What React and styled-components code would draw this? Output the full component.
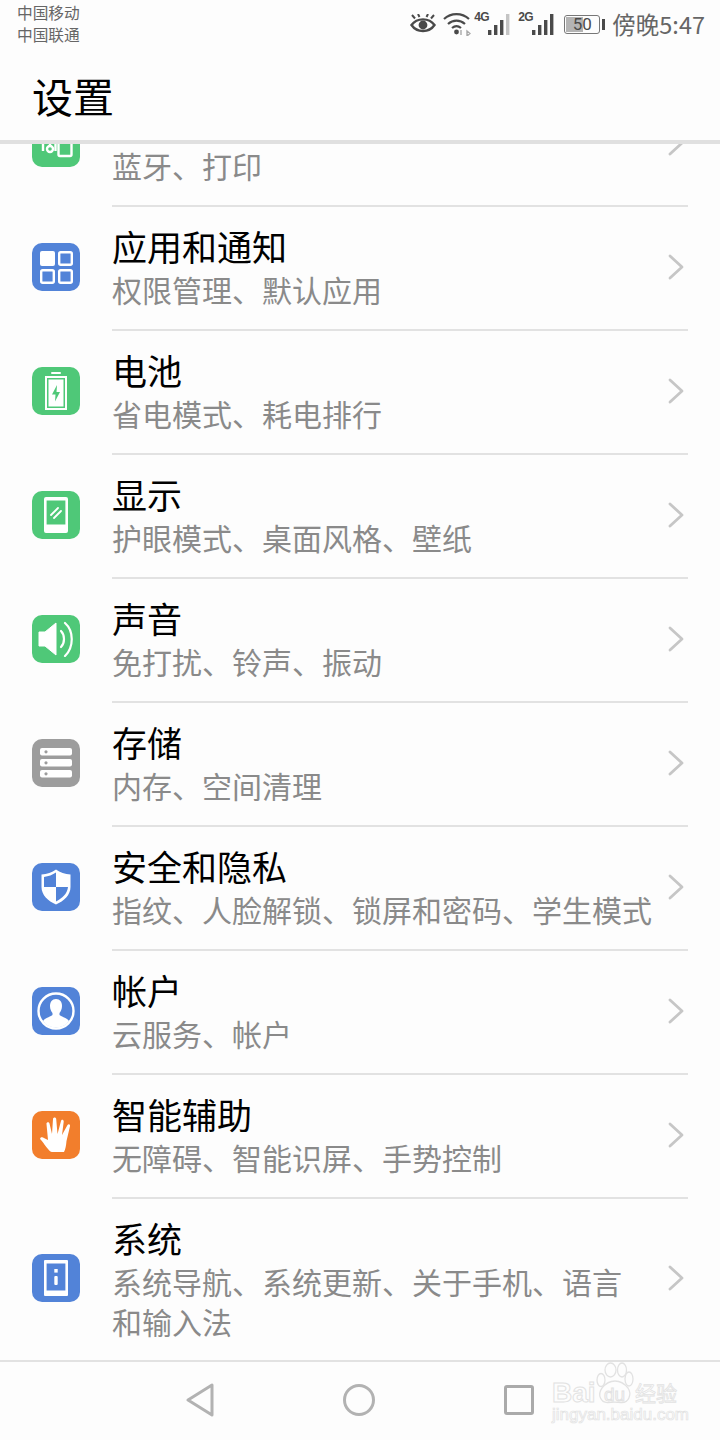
import styled, { createGlobalStyle } from 'styled-components';

const GlobalStyle = createGlobalStyle`
  html, body {
    margin: 0;
    padding: 0;
    background: #fdfdfd;
  }
  * {
    box-sizing: border-box;
  }
`;

const BLUE = '#5283d8';
const GREEN = '#4fc878';
const GRAY = '#9d9d9d';
const ORANGE = '#f27e2c';
const STATUS_DARK = '#4a4a4a';

const ConnectIcon = () => (
  <svg width="36" height="36" viewBox="0 0 36 36" fill="none" stroke="#fff" strokeWidth="2.4">
    <rect x="20.5" y="5" width="13" height="26" rx="1.5" />
    <circle cx="12" cy="24" r="3" />
    <path d="M12 8 V21 M5 8 V26 M17.5 8 V26" />
  </svg>
);

const AppsIcon = () => (
  <svg width="33" height="33" viewBox="0 0 33 33" fill="none" stroke="#fff" strokeWidth="2.4">
    <rect x="0" y="0" width="15" height="15" rx="2" fill="#fff" stroke="none" />
    <rect x="19.2" y="1.2" width="12.6" height="12.6" rx="1.5" />
    <rect x="1.2" y="19.2" width="12.6" height="12.6" rx="1.5" />
    <rect x="19.2" y="19.2" width="12.6" height="12.6" rx="1.5" />
  </svg>
);

const BatteryIcon = () => (
  <svg width="24" height="38" viewBox="0 0 24 38" fill="none">
    <rect x="7" y="0" width="10" height="2" rx="1" fill="#fff" />
    <rect x="2" y="5" width="20" height="32" stroke="#fff" strokeWidth="2" />
    <rect x="4.5" y="7.5" width="15" height="27" fill="#fff" />
    <path d="M13 13 L8 22.5 H11.5 L11 29.5 L16 20 H12.5 Z" fill={GREEN} />
  </svg>
);

const DisplayIcon = () => (
  <svg width="24" height="36" viewBox="0 0 24 36">
    <path fillRule="evenodd" d="M2 0 H22 A2 2 0 0 1 24 2 V34 A2 2 0 0 1 22 36 H2 A2 2 0 0 1 0 34 V2 A2 2 0 0 1 2 0 Z M2.6 3.6 V27.5 H21.4 V3.6 Z" fill="#fff" />
    <path d="M7 18 L14 11 M10 21 L17 14" stroke="#fff" strokeWidth="1.8" strokeLinecap="round" />
  </svg>
);

const SoundIcon = () => (
  <svg width="36" height="36" viewBox="0 0 36 36" fill="none">
    <path d="M1 11 H7 L18 2 V34 L7 25 H1 Z" fill="#fff" stroke="#fff" strokeWidth="1" strokeLinejoin="round" />
    <path d="M23 10 C27 14 27 22 23 26" stroke="#fff" strokeWidth="2.2" strokeLinecap="round" />
    <path d="M27 2 C36 10 36 26 27 35" stroke="#fff" strokeWidth="2.2" strokeLinecap="round" />
  </svg>
);

const StorageIcon = () => (
  <svg width="32" height="30" viewBox="0 0 32 30">
    <rect x="0" y="0" width="32" height="7.6" rx="2" fill="#fff" />
    <rect x="0" y="11" width="32" height="7.6" rx="2" fill="#fff" />
    <rect x="0" y="22" width="32" height="7.6" rx="2" fill="#fff" />
    <circle cx="6" cy="3.8" r="1.6" fill={GRAY} />
    <circle cx="6" cy="14.8" r="1.6" fill={GRAY} />
    <circle cx="6" cy="25.8" r="1.6" fill={GRAY} />
  </svg>
);

const ShieldIcon = () => (
  <svg width="32" height="38" viewBox="0 0 32 38" fill="none">
    <path d="M16 1.5 C20 4.5 25 6 30.5 6.5 V19 C30.5 27 24 33 16 36.5 C8 33 1.5 27 1.5 19 V6.5 C7 6 12 4.5 16 1.5 Z" fill="#fff" />
    <path d="M16 4.6 C12.5 7 8.5 8.4 4 9 V19 H16 Z" fill={BLUE} />
    <path d="M16 19 H28 C27.5 25.5 22 30.5 16 33.4 Z" fill={BLUE} />
  </svg>
);

const AccountIcon = () => (
  <svg width="38" height="38" viewBox="0 0 38 38" fill="none">
    <circle cx="19" cy="19" r="17.5" stroke="#fff" strokeWidth="2.4" />
    <path d="M19 7 C23 7 25 10 25 14 C25 17 23.8 19.5 22.5 21 V23 C24.5 25 30 25.5 32 29 C29 33.5 24 35.5 19 35.5 C14 35.5 9 33.5 6 29 C8 25.5 13.5 25 15.5 23 V21 C14.2 19.5 13 17 13 14 C13 10 15 7 19 7 Z" fill="#fff" />
  </svg>
);

const HandIcon = () => (
  <svg width="32" height="36" viewBox="0 0 32 36">
    <path
      d="M8 32 C6 30 3 25 0.5 22.5 C-0.5 21 1 19.5 3 20.5 L8 23 L6.5 7 C6.3 5 9 4.7 9.5 6.5 L12 17 L13 2 C13.2 0 16 0 16.2 2 L17.5 17 L21 4 C21.5 2 24 2.7 23.7 4.7 L22 18 L27.5 8 C28.5 6.5 30.5 7.5 30 9.2 L26.5 24 C26 29 25.5 32 24 35 H12 C10.5 35 9 33.5 8 32 Z"
      fill="#fff"
    />
  </svg>
);

const InfoIcon = () => (
  <svg width="24" height="36" viewBox="0 0 24 36">
    <path fillRule="evenodd" d="M1 0 H23 A1 1 0 0 1 24 1 V35 A1 1 0 0 1 23 36 H1 A1 1 0 0 1 0 35 V1 A1 1 0 0 1 1 0 Z M2.6 3.6 V30.4 H21.4 V3.6 Z" fill="#fff" />
    <rect x="10.3" y="9" width="3.4" height="3.6" fill="#fff" />
    <rect x="10.3" y="16" width="3.4" height="9" rx="1" fill="#fff" />
  </svg>
);

// the first row is scrolled under the header, its title is out of view
const rows = [
  { sub: '蓝牙、打印', color: GREEN, Icon: ConnectIcon },
  { title: '应用和通知', sub: '权限管理、默认应用', color: BLUE, Icon: AppsIcon },
  { title: '电池', sub: '省电模式、耗电排行', color: GREEN, Icon: BatteryIcon },
  { title: '显示', sub: '护眼模式、桌面风格、壁纸', color: GREEN, Icon: DisplayIcon },
  { title: '声音', sub: '免打扰、铃声、振动', color: GREEN, Icon: SoundIcon },
  { title: '存储', sub: '内存、空间清理', color: GRAY, Icon: StorageIcon },
  { title: '安全和隐私', sub: '指纹、人脸解锁、锁屏和密码、学生模式', color: BLUE, Icon: ShieldIcon },
  { title: '帐户', sub: '云服务、帐户', color: BLUE, Icon: AccountIcon },
  { title: '智能辅助', sub: '无障碍、智能识屏、手势控制', color: ORANGE, Icon: HandIcon },
  { title: '系统', sub: '系统导航、系统更新、关于手机、语言\n和输入法', color: BLUE, Icon: InfoIcon, tall: true },
];

const Chevron = () => (
  <ChevronSlot>
    <svg width="16" height="26" viewBox="0 0 16 26" fill="none">
      <path d="M2 2 L14 13 L2 24" stroke="#c6c6c6" strokeWidth="2.8" strokeLinecap="round" strokeLinejoin="round" />
    </svg>
  </ChevronSlot>
);

const EyeIcon = () => (
  <svg width="26" height="20" viewBox="0 0 26 20" fill="none" stroke={STATUS_DARK}>
    <path d="M2 1 L5 4.5 M8 0 L9.5 3 M18 0 L16.5 3 M24 1 L21 4.5" strokeWidth="2" />
    <path d="M1.5 11 C7 3.5 19 3.5 24.5 11 C19 19 7 19 1.5 11 Z" strokeWidth="2.4" />
    <circle cx="13" cy="11" r="4.4" fill={STATUS_DARK} stroke="none" />
  </svg>
);

const WifiIcon = () => (
  <svg width="28" height="24" viewBox="0 0 28 24" fill="none" stroke={STATUS_DARK} strokeWidth="2.2">
    <path d="M1 7 C8 0.5 19 0.5 26 7" />
    <path d="M5 12 C10 7.5 17 7.5 22 12" />
    <path d="M9 16 C12 13.5 15 13.5 18 16" />
    <circle cx="13.5" cy="20" r="2.4" fill={STATUS_DARK} stroke="none" />
    <path d="M18 18 V23 M24 19 L27 21.5 L24 24 Z" strokeWidth="1.4" stroke="#a8a8a8" />
  </svg>
);

const Signal = ({ label, lastColor, gap }) => (
  <SignalWrap $gap={gap}>
    <SignalLabel>{label}</SignalLabel>
    <svg width="22" height="21" viewBox="0 0 22 21">
      <rect x="0" y="16" width="3.4" height="5" fill={STATUS_DARK} />
      <rect x="6" y="11" width="3.4" height="10" fill={STATUS_DARK} />
      <rect x="12" y="6" width="3.4" height="15" fill={STATUS_DARK} />
      <rect x="18" y="0" width="3.4" height="21" fill={lastColor} />
    </svg>
  </SignalWrap>
);

export default function App() {
  return (
    <Page>
      <GlobalStyle />
      <StatusBar>
        <Carriers>
          <span>中国移动</span>
          <span>中国联通</span>
        </Carriers>
        <StatusIcons>
          <EyeIcon />
          <WifiSlot>
            <WifiIcon />
          </WifiSlot>
          <Signal label="4G" lastColor="#c4c4c4" gap={17} />
          <Signal label="2G" lastColor={STATUS_DARK} gap={22} />
          <BatteryWrap>
            <BatteryBody>
              <BatteryFill />
              <BatteryText>50</BatteryText>
            </BatteryBody>
            <BatteryTip />
          </BatteryWrap>
          <Clock>傍晚5:47</Clock>
        </StatusIcons>
      </StatusBar>
      <Header>设置</Header>
      <List>
        <ScrolledRows>
          {rows.map(({ title, sub, color, Icon, tall }) => (
            <Row key={sub} $tall={tall}>
              <IconTile $color={color}>
                <Icon />
              </IconTile>
              <RowBody $tall={tall}>
                <Title>{title}</Title>
                <Sub>{sub}</Sub>
              </RowBody>
              <Chevron />
            </Row>
          ))}
        </ScrolledRows>
      </List>
      <NavBar>
        <svg width="28" height="34" viewBox="0 0 28 34" fill="none">
          <path d="M26 2 V32 L2 17 Z" stroke="#b2b2b2" strokeWidth="3" strokeLinejoin="round" />
        </svg>
        <svg width="32" height="32" viewBox="0 0 32 32" fill="none">
          <circle cx="16" cy="16" r="14.5" stroke="#b2b2b2" strokeWidth="3" />
        </svg>
        <svg width="30" height="30" viewBox="0 0 30 30" fill="none">
          <rect x="1.5" y="1.5" width="27" height="27" rx="1.5" stroke="#aaaaaa" strokeWidth="3" />
        </svg>
        <Watermark>
          <WatermarkLogo>
            <WatermarkBai>Bai</WatermarkBai>
            <PawSlot>
              <svg width="38" height="42" viewBox="0 0 38 42" fill="#fdfdfd" stroke="#e2e2e2" strokeWidth="1.3">
                <ellipse cx="5" cy="18" rx="4" ry="6.5" />
                <ellipse cx="14.5" cy="8" rx="5.5" ry="7" />
                <ellipse cx="26" cy="8" rx="4.5" ry="7" />
                <ellipse cx="33" cy="17" rx="4" ry="7" />
                <path d="M19 19 C24 19 28 21 32 26 C36 32 33 41 25 40.5 C21 40 16 40 12 40.5 C5 41 1 33 6 26 C10 21 14 19 19 19 Z" />
              </svg>
              <PawLabel>du</PawLabel>
            </PawSlot>
            <WatermarkCn>经验</WatermarkCn>
          </WatermarkLogo>
          <WatermarkUrl>jingyan.baidu.com</WatermarkUrl>
        </Watermark>
      </NavBar>
    </Page>
  );
}

const Page = styled.div`
  width: 720px;
  height: 1440px;
  display: flex;
  flex-direction: column;
  overflow: hidden;
  background: #fdfdfd;
  font-family: "Noto Sans CJK SC", "Noto Sans", sans-serif;
`;

const StatusBar = styled.div`
  height: 50px;
  flex: none;
  display: flex;
  justify-content: space-between;
  align-items: flex-start;
  padding: 2px 15px 0 17px;
`;

const Carriers = styled.div`
  display: flex;
  flex-direction: column;
  font-size: 15.7px;
  line-height: 22px;
  color: #666;
`;

const StatusIcons = styled.div`
  display: flex;
  align-items: center;
  height: 44px;
`;

const WifiSlot = styled.div`
  display: flex;
  margin-left: 7px;
`;

const SignalWrap = styled.div`
  position: relative;
  width: 22px;
  height: 21px;
  margin-left: ${({ $gap }) => $gap}px;
`;

const SignalLabel = styled.span`
  position: absolute;
  left: -14px;
  top: -4px;
  font-family: "Liberation Sans", sans-serif;
  font-size: 12px;
  line-height: 14px;
  letter-spacing: -0.8px;
  font-weight: 700;
  color: ${STATUS_DARK};
`;

const BatteryWrap = styled.div`
  display: flex;
  align-items: center;
  margin-left: 10px;
  gap: 2px;
`;

const BatteryBody = styled.div`
  position: relative;
  width: 36px;
  height: 19px;
  border: 1.5px solid #777;
  border-radius: 3px;
  display: flex;
  align-items: center;
  justify-content: center;
`;

const BatteryFill = styled.div`
  position: absolute;
  left: 1px;
  top: 1px;
  bottom: 1px;
  width: 17px;
  background: #b4b4b4;
`;

const BatteryText = styled.span`
  position: relative;
  font-family: "Roboto", sans-serif;
  font-size: 17px;
  line-height: 1;
  color: ${STATUS_DARK};
`;

const BatteryTip = styled.div`
  width: 3px;
  height: 11px;
  background: ${STATUS_DARK};
`;

const Clock = styled.div`
  margin-left: 7px;
  font-size: 23.5px;
  line-height: 44px;
  color: #666;
`;

const Header = styled.div`
  height: 94px;
  flex: none;
  padding: 15px 0 0 32px;
  font-size: 41px;
  line-height: 60px;
  color: #000;
  border-bottom: 4px solid #e0e0e0;
`;

const List = styled.div`
  flex: 1;
  min-height: 0;
  padding: 0 32px;
  overflow: hidden;
`;

const ScrolledRows = styled.div`
  margin-top: -62px;
`;

const Row = styled.div`
  height: ${({ $tall }) => ($tall ? '162px' : '124px')};
  display: flex;
  align-items: center;
  position: relative;
  padding-right: 4px;
  &::after {
    content: '';
    position: absolute;
    left: 80px;
    right: 0;
    bottom: -1px;
    height: 2px;
    background: #e2e2e2;
  }
  &:last-child::after {
    display: none;
  }
`;

const IconTile = styled.div`
  width: 48px;
  height: 48px;
  flex: none;
  border-radius: 10px;
  background: ${({ $color }) => $color};
  display: flex;
  align-items: center;
  justify-content: center;
  margin-bottom: 2px;
`;

const RowBody = styled.div`
  flex: 1;
  min-width: 0;
  margin-left: 32px;
  margin-top: ${({ $tall }) => ($tall ? '-2px' : '-4px')};
`;

const Title = styled.div`
  height: 46px;
  font-size: 35px;
  line-height: 46px;
  color: #000;
  white-space: nowrap;
`;

const Sub = styled.div`
  font-size: 30px;
  line-height: 40px;
  color: #8a8a8a;
  white-space: pre-line;
`;

const ChevronSlot = styled.div`
  display: flex;
  margin-bottom: 2px;
`;

const NavBar = styled.div`
  position: relative;
  height: 80px;
  flex: none;
  border-top: 2px solid #e2e2e2;
  display: flex;
  align-items: center;
  padding: 0 186px 2px;
  justify-content: space-between;
`;

const Watermark = styled.div`
  position: absolute;
  left: 552px;
  top: 0;
  width: 140px;
  display: flex;
  flex-direction: column;
  color: #fdfdfd;
  -webkit-text-stroke: 1px #e2e2e2;
  white-space: nowrap;
`;

const WatermarkLogo = styled.div`
  display: flex;
  align-items: flex-end;
  height: 45px;
`;

const WatermarkBai = styled.span`
  width: 44px;
  font-family: "Liberation Sans", sans-serif;
  font-size: 28px;
  font-weight: 700;
  line-height: 28px;
`;

const PawSlot = styled.div`
  position: relative;
  width: 38px;
  height: 42px;
  flex: none;
  align-self: flex-start;
`;

const PawLabel = styled.span`
  position: absolute;
  left: 8px;
  bottom: -1px;
  font-family: "Liberation Sans", sans-serif;
  font-size: 19px;
  line-height: 20px;
`;

const WatermarkCn = styled.span`
  margin: 0 0 2px 1px;
  font-size: 21px;
  line-height: 26px;
  -webkit-text-stroke-width: 0.8px;
`;

const WatermarkUrl = styled.div`
  margin-top: -1px;
  font-family: "Liberation Sans", sans-serif;
  font-size: 17px;
  line-height: 18px;
  -webkit-text-stroke-width: 0.7px;
`;
